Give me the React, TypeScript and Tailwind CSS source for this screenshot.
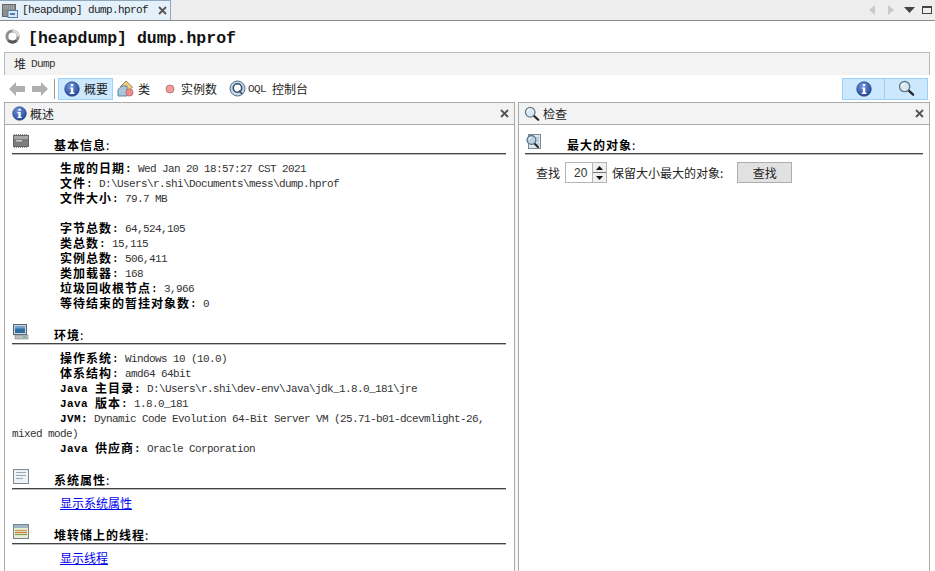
import React from "react";

const cjk = "font-['Noto_Sans_CJK_SC','Noto_Sans',sans-serif]";

function M({ children, b }: { children: React.ReactNode; b?: boolean }) {
  return (
    <span className={`font-['Liberation_Mono',monospace] text-[11px] leading-[8px] align-[1px] ${b ? "font-bold tracking-[0.4px] text-black" : "font-normal tracking-[-0.6px] text-[#333]"}`}>
      {children}
    </span>
  );
}

function Info({ size = 16 }: { size?: number }) {
  return (
    <svg width={size} height={size} viewBox="0 0 16 16" className="shrink-0">
      <defs>
        <radialGradient id="ig" cx="40%" cy="30%" r="80%">
          <stop offset="0" stopColor="#6f93d8" />
          <stop offset="1" stopColor="#1d3f8f" />
        </radialGradient>
      </defs>
      <circle cx="8" cy="8" r="7.3" fill="url(#ig)" stroke="#1c3a80" strokeWidth="0.6" />
      <rect x="6.9" y="3" width="2.4" height="2.2" fill="#fff" />
      <path d="M5.8 6.4h3.5v5.2h1.1v1.3H5.8v-1.3h1.1V7.7H5.8z" fill="#fff" />
    </svg>
  );
}

function Lens({ size = 18 }: { size?: number }) {
  return (
    <svg width={size} height={size} viewBox="0 0 18 18" className="shrink-0">
      <path d="M10.5 10.5l5.5 5" stroke="#222" strokeWidth="2.4" strokeLinecap="round" />
      <circle cx="7" cy="7" r="5.4" fill="#dbe8f0" stroke="#5d7a8c" strokeWidth="1.4" />
      <path d="M3.8 6.5a3.4 3.4 0 0 1 3-3" stroke="#fff" strokeWidth="1.3" fill="none" />
    </svg>
  );
}

function DocLens() {
  return (
    <svg width="16" height="16" viewBox="0 0 16 16" className="shrink-0">
      <rect x="2.5" y="0.5" width="12" height="14" fill="#dfe7ed" stroke="#7c8a96" />
      <path d="M10 4h3M11 7h2M11 10h2" stroke="#9aa9b5" />
      <path d="M7.5 8.5l4.5 4.5" stroke="#222" strokeWidth="2" strokeLinecap="round" />
      <circle cx="5.5" cy="6" r="4.4" fill="#bcd2e0" stroke="#4f6f85" strokeWidth="1.3" />
      <path d="M3 5.5a2.7 2.7 0 0 1 2.2-2.2" stroke="#fff" fill="none" />
    </svg>
  );
}

function X() {
  return (
    <svg width="9" height="9" viewBox="0 0 9 9" className="shrink-0">
      <path d="M1 1l7 7M8 1l-7 7" stroke="#555" strokeWidth="1.8" />
    </svg>
  );
}

function ChipIcon() {
  return (
    <svg width="16" height="15" viewBox="0 0 16 15" className="shrink-0">
      <rect x="0.5" y="1.5" width="15" height="11" fill="#7d7d7d" stroke="#666" />
      <rect x="1" y="2" width="14" height="3" fill="#a8a8a8" />
      <rect x="3" y="6" width="6" height="1.5" fill="#d0d0d0" />
      <path d="M1 0.5h14M1 13.5h14" stroke="#888" strokeDasharray="1 1" />
    </svg>
  );
}

function MonitorIcon() {
  return (
    <svg width="16" height="16" viewBox="0 0 16 16" className="shrink-0">
      <rect x="0.5" y="0.5" width="13" height="10" fill="#cfd6dc" stroke="#56636e" />
      <rect x="2" y="2" width="10" height="7" fill="#2e6ea6" />
      <rect x="2" y="2" width="10" height="2.5" fill="#6fa4cf" />
      <rect x="2" y="11" width="13" height="4" fill="#b9c0c6" stroke="#7a858e" strokeWidth="0.6" />
      <rect x="10" y="12.5" width="3" height="1" fill="#4caf50" />
    </svg>
  );
}

function PropsIcon() {
  return (
    <svg width="16" height="15" viewBox="0 0 16 15" className="shrink-0">
      <rect x="0.5" y="0.5" width="15" height="14" fill="#eef2f5" stroke="#7c8a96" />
      <path d="M3 3.5h10M3 6.5h10M3 9.5h7" stroke="#9aa9b5" strokeWidth="1.2" />
    </svg>
  );
}

function ThreadsIcon() {
  return (
    <svg width="16" height="15" viewBox="0 0 16 15" className="shrink-0">
      <rect x="0.5" y="0.5" width="15" height="14" fill="#e9edd8" stroke="#77858f" />
      <rect x="1" y="1" width="14" height="3" fill="#9fb4c4" />
      <path d="M2 6.5h12" stroke="#b9a24a" strokeWidth="1.2" />
      <path d="M2 8.5h12" stroke="#d97a3a" strokeWidth="1.2" />
      <path d="M2 10.5h12" stroke="#7fa54e" strokeWidth="1.2" />
    </svg>
  );
}

function Heading({ icon, children }: { icon: React.ReactNode; children: React.ReactNode }) {
  return (
    <div className="flex h-[26px] items-start border-b border-[#444] shadow-[0_1px_0_#bbb] pl-px">
      <div className="mt-[6px] w-[41px] shrink-0">{icon}</div>
      <div className="mt-[9px] text-[12px] leading-[16px] font-bold tracking-[1px] text-black">{children}</div>
    </div>
  );
}

function Row({ k, children }: { k: React.ReactNode; children: React.ReactNode }) {
  return (
    <div className="indent-[48px] text-[12px] leading-[15px]">
      <span className="font-bold tracking-[1px] text-black">{k}</span>
      <M b>:</M>
      <M> {children}</M>
    </div>
  );
}

function Link({ children }: { children: React.ReactNode }) {
  return <div className="indent-[48px] text-[12px] leading-[15px] text-[#0000ee] underline">{children}</div>;
}

function Section({ icon, title, children }: { icon: React.ReactNode; title: string; children: React.ReactNode }) {
  return (
    <section className="mt-[8px]">
      <Heading icon={icon}>{title}<span className="font-normal">:</span></Heading>
      <div className="pt-[6px]">{children}</div>
    </section>
  );
}

function ToolText({ children }: { children: React.ReactNode }) {
  return <span className="text-[12px] leading-none text-[#222]">{children}</span>;
}

export default function App() {
  return (
    <div className={`flex h-[571px] w-[935px] flex-col overflow-hidden bg-white ${cjk}`}>
      {/* Tab bar */}
      <div className="flex h-[21px] shrink-0 items-start border-b border-[#8a8a8a] bg-[#eeeeee]">
        <div className="flex h-[20px] w-[171px] items-center border-r border-t border-[#8fa8bd] bg-[#e4f1fa] pl-[2px]">
          <svg width="16" height="15" viewBox="0 0 16 15" className="shrink-0">
            <rect x="0.5" y="1.5" width="13" height="12" fill="#8d8d8d" stroke="#666" />
            <path d="M1 3h12M1 5h12" stroke="#bbb" strokeDasharray="1 1" />
            <rect x="6" y="7.5" width="9.5" height="7" fill="#dbe7f2" stroke="#4d7fb0" />
            <rect x="8" y="10" width="5" height="2" fill="#4d7fb0" />
          </svg>
          <span className="ml-[4px] w-[136px] font-['Liberation_Mono',monospace] text-[11px] tracking-[-0.6px] text-[#222]">[heapdump] dump.hprof</span>
          <X />
        </div>
        <div className="ml-auto flex h-[20px] items-center pr-[3px]">
          <svg width="8" height="12" viewBox="0 0 8 12" className="mr-[11px]"><path d="M7 1L1 6l6 5z" fill="#c9c9c9" /></svg>
          <svg width="8" height="12" viewBox="0 0 8 12" className="mr-[9px]"><path d="M1 1l6 5-6 5z" fill="#c9c9c9" /></svg>
          <svg width="11" height="6" viewBox="0 0 11 6" className="mr-[7px]"><path d="M0 0h11L5.5 6z" fill="#444" /></svg>
          <div className="h-[8px] w-[10px] border border-t-2 border-[#444]" />
        </div>
      </div>

      {/* Title */}
      <div className="flex h-[31px] shrink-0 items-center pl-[5px]">
        <svg width="15" height="15" viewBox="0 0 15 15" className="shrink-0">
          <circle cx="7.5" cy="7.5" r="5.6" fill="none" stroke="#8f8f8f" strokeWidth="3" />
          <path d="M7.5 1.9a5.6 5.6 0 0 1 5.6 5.6" fill="none" stroke="#dcdcdc" strokeWidth="3" />
          <path d="M3.5 11.5a5.6 5.6 0 0 0 8 0" fill="none" stroke="#555" strokeWidth="3" />
        </svg>
        <span className="mt-[5px] ml-[8px] font-['Liberation_Mono',monospace] text-[16.5px] leading-none font-bold text-[#111]">[heapdump] dump.hprof</span>
      </div>

      {/* Dump bar */}
      <div className="mr-[5px] ml-[4px] flex h-[23px] shrink-0 items-center gap-[5px] border-t border-r border-l border-[#bbbbbb] bg-[#f3f3f3] pl-[9px]">
        <span className="text-[12px] leading-none text-[#222]">堆</span>
        <M>Dump</M>
      </div>

      {/* Toolbar */}
      <div className="flex h-[27px] shrink-0 items-center pr-[7px] pl-[9px]">
        <svg width="16" height="14" viewBox="0 0 16 14" className="shrink-0"><path d="M7 0v4h9v6H7v4L0 7z" fill="#b0b0b0" /></svg>
        <svg width="16" height="14" viewBox="0 0 16 14" className="ml-[7px] shrink-0"><path d="M9 0v4H0v6h9v4l7-7z" fill="#b0b0b0" /></svg>
        <div className="ml-[6px] h-[20px] w-px bg-[#999]" />
        <div className="ml-[3px] flex h-[22px] w-[55px] items-center gap-[4px] border border-[#99d1ff] bg-[#cce8ff] pl-[5px]">
          <Info />
          <ToolText>概要</ToolText>
        </div>
        <svg width="18" height="17" viewBox="0 0 18 17" className="ml-[4px] shrink-0">
          <path d="M9 1l6.5 6-5 5-7-5.5z" fill="#f2cd80" stroke="#8a7a50" strokeWidth="0.9" />
          <path d="M1 9.5l4-3.5h5v10H1z" fill="#a9c6dd" stroke="#5c7a92" strokeWidth="0.9" />
          <circle cx="12.5" cy="12.5" r="3.6" fill="#ee8d8d" stroke="#a85c5c" strokeWidth="0.7" />
        </svg>
        <span className="ml-[3px] flex items-center"><ToolText>类</ToolText></span>
        <svg width="10" height="10" viewBox="0 0 10 10" className="ml-[15px] shrink-0">
          <circle cx="5" cy="5" r="4" fill="#f29c9c" stroke="#a86a6a" strokeWidth="0.8" />
        </svg>
        <span className="ml-[6px] flex items-center"><ToolText>实例数</ToolText></span>
        <svg width="17" height="17" viewBox="0 0 17 17" className="ml-[12px] shrink-0">
          <circle cx="8.5" cy="8.5" r="7.5" fill="#c8d7e6" stroke="#4d6a8a" />
          <circle cx="8.5" cy="8" r="4.2" fill="#fff" stroke="#33506f" strokeWidth="1.6" />
          <path d="M10 10.5l3 3.5" stroke="#33506f" strokeWidth="1.6" />
        </svg>
        <span className="ml-[2px] flex items-center"><M>OQL</M></span>
        <span className="ml-[6px] flex items-center"><ToolText>控制台</ToolText></span>
        <div className="ml-auto flex h-[22px]">
          <div className="flex w-[43px] items-center justify-center border border-[#99d1ff] bg-[#cce8ff]"><Info /></div>
          <div className="flex w-[43px] items-center justify-center border border-l-0 border-[#99d1ff] bg-[#cce8ff]"><Lens size={17} /></div>
        </div>
      </div>

      {/* Panels */}
      <div className="flex min-h-0 flex-1 pr-[5px] pl-[4px]">
        <div className="flex min-w-0 w-[511px] flex-col border-r border-l border-[#aaaaaa]">
          <div className="flex h-[23px] shrink-0 items-center border-y border-[#aaaaaa] bg-[#f3f3f3] pr-[5px] pl-[7px]">
            <Info size={15} />
            <span className="ml-[3px] text-[12px] leading-none text-[#222]">概述</span>
            <span className="ml-auto"><X /></span>
          </div>
          <div className="-ml-[1px] pr-[8px] pl-[8px] text-[#333]">
            <div className="-mt-[5px]">
              <Section icon={<ChipIcon />} title="基本信息">
                <Row k="生成的日期">Wed Jan 20 18:57:27 CST 2021</Row>
                <Row k="文件">D:\Users\r.shi\Documents\mess\dump.hprof</Row>
                <Row k="文件大小">79.7 MB</Row>
                <div className="h-[15px]" />
                <Row k="字节总数">64,524,105</Row>
                <Row k="类总数">15,115</Row>
                <Row k="实例总数">506,411</Row>
                <Row k="类加载器">168</Row>
                <Row k="垃圾回收根节点">3,966</Row>
                <Row k="等待结束的暂挂对象数">0</Row>
              </Section>
              <Section icon={<MonitorIcon />} title="环境">
                <Row k="操作系统">Windows 10 (10.0)</Row>
                <Row k="体系结构">amd64 64bit</Row>
                <Row k={<><M b>Java </M>主目录</>}>D:\Users\r.shi\dev-env\Java\jdk_1.8.0_181\jre</Row>
                <Row k={<><M b>Java </M>版本</>}>1.8.0_181</Row>
                <Row k={<M b>JVM</M>}>Dynamic Code Evolution 64-Bit Server VM (25.71-b01-dcevmlight-26, mixed mode)</Row>
                <Row k={<><M b>Java </M>供应商</>}>Oracle Corporation</Row>
              </Section>
              <Section icon={<PropsIcon />} title="系统属性">
                <Link>显示系统属性</Link>
              </Section>
              <Section icon={<ThreadsIcon />} title="堆转储上的线程">
                <Link>显示线程</Link>
              </Section>
            </div>
          </div>
        </div>
        <div className="w-[3px] shrink-0 bg-[#f7f7f7]" />
        <div className="flex min-w-0 flex-1 flex-col border-r border-l border-[#aaaaaa]">
          <div className="flex h-[23px] shrink-0 items-center border-y border-[#aaaaaa] bg-[#f3f3f3] pr-[5px] pl-[5px]">
            <Lens size={16} />
            <span className="ml-[3px] text-[12px] leading-none text-[#222]">检查</span>
            <span className="ml-auto"><X /></span>
          </div>
          <div className="px-[6px]">
            <div className="-mt-[5px]">
              <section className="mt-[8px]">
                <Heading icon={<DocLens />}>最大的对象<span className="font-normal">:</span></Heading>
                <div className="flex items-center pt-[8px] pl-[11px]">
                  <span className="text-[12px] leading-none text-[#222]">查找</span>
                  <div className="ml-[5px] flex h-[21px] w-[42px] items-center border border-[#b5b5b5] bg-white pl-[8px]">
                    <span className="w-[19px] font-['Liberation_Sans',sans-serif] text-[12px] leading-none text-[#333]">20</span>
                    <div className="flex h-[19px] w-[14px] flex-col gap-px border-l border-[#b5b5b5] bg-[#777]">
                      <div className="flex flex-1 items-center justify-center bg-[#f0f0f0]"><svg width="7" height="4" viewBox="0 0 7 4"><path d="M3.5 0L7 4H0z" fill="#111" /></svg></div>
                      <div className="flex flex-1 items-center justify-center bg-[#f0f0f0]"><svg width="7" height="4" viewBox="0 0 7 4"><path d="M0 0h7L3.5 4z" fill="#111" /></svg></div>
                    </div>
                  </div>
                  <span className="ml-[5px] text-[12px] leading-none text-[#222]">保留大小最大的对象:</span>
                  <button className="ml-[14px] flex h-[21px] w-[55px] items-center justify-center border border-[#adadad] bg-[#e1e1e1] text-[12px] leading-none text-[#222]">查找</button>
                </div>
              </section>
            </div>
          </div>
        </div>
      </div>
    </div>
  );
}
